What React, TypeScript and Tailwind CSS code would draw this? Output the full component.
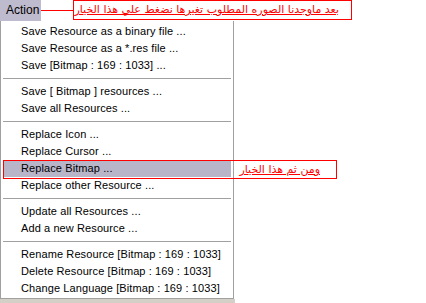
import React from "react";

type Entry = { label: string; active?: boolean } | "sep";

const entries: Entry[] = [
  { label: "Save Resource as a binary file ..." },
  { label: "Save Resource as a *.res file ..." },
  { label: "Save [Bitmap : 169 : 1033] ..." },
  "sep",
  { label: "Save [ Bitmap ] resources ..." },
  { label: "Save all Resources ..." },
  "sep",
  { label: "Replace Icon ..." },
  { label: "Replace Cursor ..." },
  { label: "Replace Bitmap ...", active: true },
  { label: "Replace other Resource ..." },
  "sep",
  { label: "Update all Resources ..." },
  { label: "Add a new Resource ..." },
  "sep",
  { label: "Rename Resource [Bitmap : 169 : 1033]" },
  { label: "Delete Resource [Bitmap : 169 : 1033]" },
  { label: "Change Language [Bitmap : 169 : 1033]" },
];

export default function App() {
  return (
    <div className="relative h-[303px] w-[426px] overflow-hidden bg-white font-['Liberation_Sans',Arial,sans-serif] text-[11px] text-black">
      {/* menu bar + note */}
      <div className="flex h-[21px] items-start">
        <div className="h-[21px] w-[41px] bg-[#bebbce] pl-[6px] text-[12px] leading-[21px]">Action</div>
        <div className="mt-[10px] h-px w-[32px] bg-[#ff0000]" />
        <div
          dir="rtl"
          className="h-[20px] w-[279px] whitespace-nowrap border border-[#ff0000] pr-[12px] font-['DejaVu_Sans',sans-serif] text-[11px] leading-[17px] text-[#ff0000] underline"
        >
          بعد ماوجدنا الصوره المطلوب تغيرها نضغط علي هذا الخيار
        </div>
      </div>

      {/* dropdown */}
      <div className="w-[234px] border-x border-b border-[#a0a0a0] bg-white pt-[2px] pb-px">
        {entries.map((e, i) =>
          e === "sep" ? (
            <div key={i} className="flex h-[9px] items-center px-[2px]">
              <div className="h-px w-full bg-[#a0a0a0]" />
            </div>
          ) : (
            <div
              key={i}
              className={`mx-[2px] h-[17px] pl-[18px] leading-[17px] tracking-[0.1px] whitespace-nowrap ${e.active ? "bg-[#b9b5c9]" : ""}`}
            >
              {e.label}
            </div>
          ),
        )}
      </div>
      <div className="h-[5px] w-[235px] bg-[#d4d0c8]" />

      {/* second note around highlighted item */}
      <div className="absolute left-[3px] top-[160px] h-[19px] w-[334px] border border-[#ff0000]">
        <div
          dir="rtl"
          className="absolute right-[16px] top-0 font-['DejaVu_Sans',sans-serif] text-[11px] leading-[17px] text-[#ff0000] underline"
        >
          ومن ثم هذا الخيار
        </div>
      </div>
    </div>
  );
}
